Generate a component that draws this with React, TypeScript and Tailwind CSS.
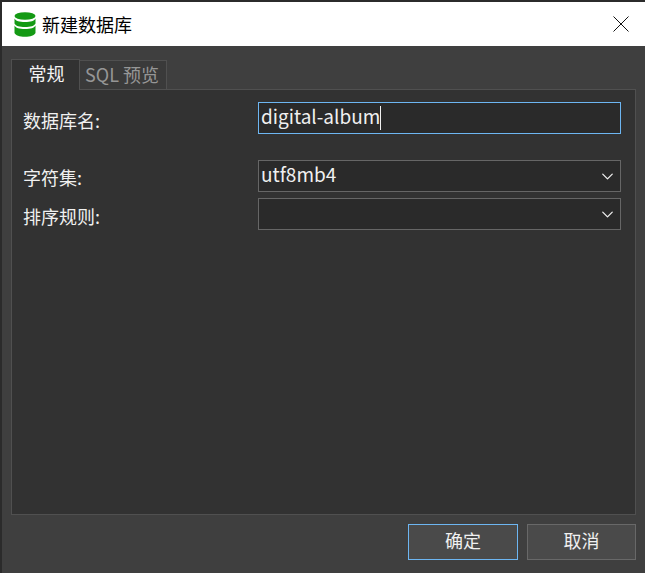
import { ChevronDown } from "lucide-react";

const font = "[font-family:'Noto_Sans_CJK_SC','Open_Sans',sans-serif]";

const DbIcon = () => (
  <svg width="22" height="25" viewBox="0 0 22 25" className="shrink-0">
    <ellipse cx="11" cy="4" rx="10.500" ry="3.800" fill="#149a14" />
    <path d="M.5 6.500c1 2.400 5 3.600 10.500 3.600s9.500-1.200 10.500-3.600v5c-1 2.400-5 3.600-10.500 3.600S1.500 13.900.5 11.500z" fill="#149a14" />
    <path d="M.5 13.500c1 2.400 5 3.600 10.500 3.600s9.500-1.200 10.500-3.600V21c-1 2.400-5 3.800-10.500 3.800S1.500 23.400.5 21z" fill="#149a14" />
  </svg>
);

const Select = ({ value }: { value?: string }) => (
  <div className="w-[363px] h-[32px] flex items-center justify-between pl-[2px] pr-[3px] bg-[#2a2a2a] border border-[#666666] text-[19px] text-[#f0f0f0]">
    <span className="pb-[3px]">{value}</span>
    <ChevronDown size={19} color="#f0f0f0" strokeWidth={1.6} />
  </div>
);

export default function App() {
  return (
    <div className={`w-[645px] h-[573px] flex flex-col bg-[#2b2b2b] pt-[2px] pl-[2px] ${font}`}>
      <div className="h-[44px] shrink-0 flex items-center bg-white pl-[12px] pr-[16px]">
        <DbIcon />
        <span className="ml-[6px] text-[18px] text-black">新建数据库</span>
        <svg width="16" height="16" viewBox="0 0 16 16" className="ml-auto">
          <path d="M.5.500l15 15M15.500.500l-15 15" stroke="#111111" strokeWidth="1" fill="none" />
        </svg>
      </div>

      <div className="flex-1 flex flex-col bg-[#3f3f3f] pl-[9px] pr-[9px] pt-[13px]">
        <div className="flex items-end h-[31px] relative z-10 -mb-px">
          <div className="w-[69px] h-[31px] flex items-center justify-center pb-[4px] pl-[2px] bg-[#323232] border border-b-0 border-[#505050] text-[18px] text-[#f2f2f2]">
            常规
          </div>
          <div className="w-[87px] h-[30px] flex items-center justify-center pb-[2px] pr-[2px] bg-[#3a3a3a] border border-l-0 border-[#505050] text-[18px] text-[#969696]">
            SQL 预览
          </div>
        </div>

        <div className="h-[426px] bg-[#323232] border border-[#505050] pl-[11px] pt-[12px] text-[18px] text-[#f0f0f0]">
          <div className="flex items-center h-[32px]">
            <span className="w-[235px] pt-[4px]">数据库名:</span>
            <div className="w-[363px] h-[32px] flex items-center pl-[2px] bg-[#2a2a2a] border border-[#6db6f2] text-[19px]">
              <span className="pb-[3px]">digital-album</span>
              <span className="w-px h-[24px] bg-[#f0f0f0]" />
            </div>
          </div>
          <div className="flex items-center h-[32px] mt-[26px]">
            <span className="w-[235px] pt-[2px]">字符集:</span>
            <Select value="utf8mb4" />
          </div>
          <div className="flex items-center h-[32px] mt-[6px]">
            <span className="w-[235px] pt-[4px]">排序规则:</span>
            <Select />
          </div>
        </div>

        <div className="flex justify-end gap-[9px] mt-[9px]">
          <div className="w-[110px] h-[36px] flex items-center justify-center pb-[4px] bg-[#4a4a4a] border border-[#6db6f2] text-[18px] text-[#f0f0f0]">
            确定
          </div>
          <div className="w-[109px] h-[36px] flex items-center justify-center pb-[4px] bg-[#4a4a4a] border border-[#686868] text-[18px] text-[#f0f0f0]">
            取消
          </div>
        </div>
      </div>
    </div>
  );
}
